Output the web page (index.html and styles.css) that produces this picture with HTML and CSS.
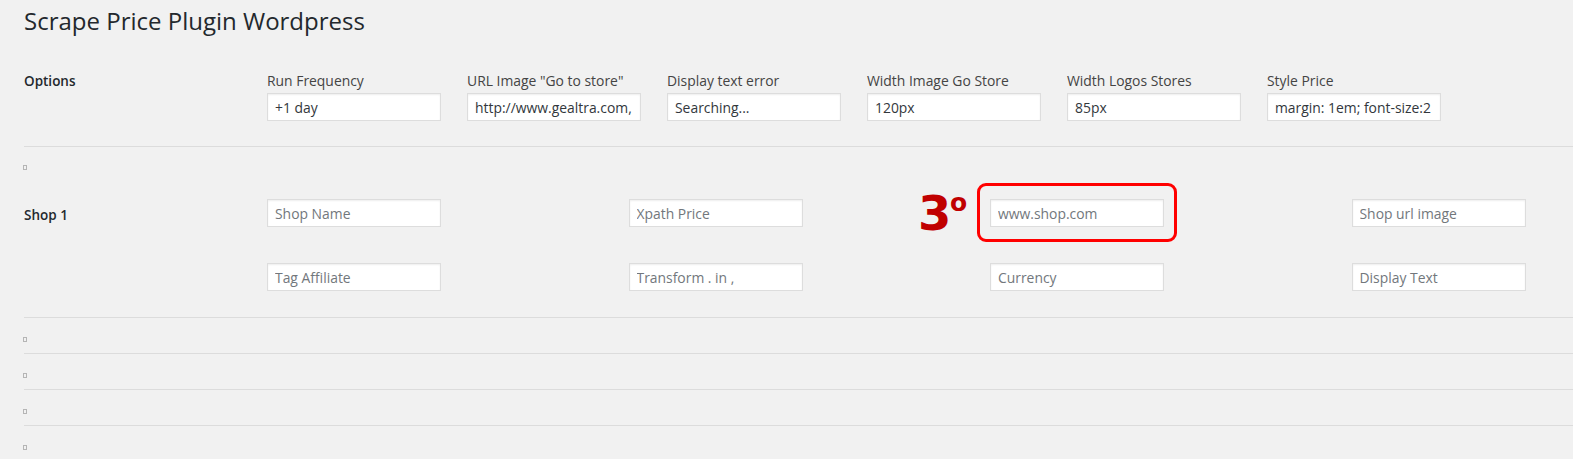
FILE: index.html
```html
<!DOCTYPE html>
<html lang="en">
<head>
<meta charset="utf-8">
<title>Scrape Price Plugin Wordpress</title>
<link rel="stylesheet" href="styles.css">
</head>
<body>
<div class="page">
  <h1 class="title">Scrape Price Plugin Wordpress</h1>

  <div class="row options-row">
    <div class="th">Options</div>
    <div class="option-fields">
      <div class="field">
        <label class="field-label">Run Frequency</label>
        <input class="text-input" type="text" value="+1 day">
      </div>
      <div class="field">
        <label class="field-label">URL Image "Go to store"</label>
        <input class="text-input" type="text" value="http://www.gealtra.com,">
      </div>
      <div class="field">
        <label class="field-label">Display text error</label>
        <input class="text-input" type="text" value="Searching...">
      </div>
      <div class="field">
        <label class="field-label">Width Image Go Store</label>
        <input class="text-input" type="text" value="120px">
      </div>
      <div class="field">
        <label class="field-label">Width Logos Stores</label>
        <input class="text-input" type="text" value="85px">
      </div>
      <div class="field">
        <label class="field-label">Style Price</label>
        <input class="text-input" type="text" value="margin: 1em; font-size:2">
      </div>
    </div>
  </div>

  <div class="section shop-section">
    <span class="tofu"></span>
    <div class="row shop-row">
      <div class="th shop-th">Shop 1</div>
      <div class="shop-grid">
        <div class="cell"><input class="text-input" type="text" placeholder="Shop Name"></div>
        <div class="cell"><input class="text-input" type="text" placeholder="Xpath Price"></div>
        <div class="cell annotated">
          <span class="step-num">3</span>
          <span class="step-sup">o</span>
          <span class="highlight-box"></span>
          <input class="text-input" type="text" placeholder="www.shop.com">
        </div>
        <div class="cell"><input class="text-input" type="text" placeholder="Shop url image"></div>
        <div class="cell"><input class="text-input" type="text" placeholder="Tag Affiliate"></div>
        <div class="cell"><input class="text-input" type="text" placeholder="Transform . in ,"></div>
        <div class="cell"><input class="text-input" type="text" placeholder="Currency"></div>
        <div class="cell"><input class="text-input" type="text" placeholder="Display Text"></div>
      </div>
    </div>
  </div>

  <div class="section empty-section"><span class="tofu"></span></div>
  <div class="section empty-section"><span class="tofu"></span></div>
  <div class="section empty-section"><span class="tofu"></span></div>
  <div class="section empty-section"><span class="tofu"></span></div>
</div>
</body>
</html>
```

FILE: styles.css
```css
* {
  box-sizing: border-box;
}

html, body {
  margin: 0;
  padding: 0;
  background: #f1f1f1;
}

body {
  font-family: "Open Sans", "Noto Sans", sans-serif;
  font-size: 14px;
  color: #444;
  overflow: hidden;
}

.page {
  padding-left: 24px;
  width: 1573px;
}

.title {
  margin: 0;
  padding-top: 6px;
  font-size: 24px;
  font-weight: 400;
  line-height: 30px;
  color: #23282d;
  letter-spacing: 0;
}

.row {
  display: flex;
  align-items: flex-start;
}

.th {
  width: 243px;
  flex: none;
  font-weight: 600;
  color: #23282d;
  font-size: 13.5px;
  line-height: 18px;
}

.options-row {
  padding-top: 36px;
  padding-bottom: 25px;
}

.option-fields {
  display: flex;
  gap: 26px;
}

.field {
  width: 174px;
  display: flex;
  flex-direction: column;
}

.field-label {
  font-size: 13.9px;
  line-height: 18px;
  color: #444;
  white-space: nowrap;
  margin-bottom: 3px;
}

.text-input {
  width: 174px;
  height: 28px;
  margin: 0;
  padding: 1px 7px 0;
  border: 1px solid #ddd;
  background: #fff;
  box-shadow: inset 0 1px 2px rgba(0, 0, 0, 0.07);
  font-family: "Open Sans", "Noto Sans", sans-serif;
  font-size: 13.9px;
  color: #32373c;
  outline: none;
  border-radius: 0;
}

.text-input::placeholder {
  color: #72777c;
  opacity: 1;
}

.section {
  border-top: 1px solid #dcdcdc;
  padding-top: 18px;
}

.tofu {
  display: block;
  width: 4px;
  height: 5px;
  margin-left: -1px;
  border: 1px solid #b5b5b5;
}

.shop-section {
  padding-bottom: 26px;
}

.shop-row {
  margin-top: 29px;
}

.shop-th {
  padding-top: 7px;
}

.shop-grid {
  display: grid;
  grid-template-columns: repeat(4, 174px);
  column-gap: 187.5px;
  row-gap: 36px;
}

.cell {
  position: relative;
  height: 28px;
}

.highlight-box {
  position: absolute;
  left: -13px;
  top: -16px;
  width: 200px;
  height: 59px;
  border: 3px solid #ff0000;
  border-radius: 9px;
  pointer-events: none;
}

.step-num {
  position: absolute;
  left: -72px;
  top: -10px;
  font-family: "DejaVu Sans", sans-serif;
  font-weight: 700;
  font-size: 48px;
  line-height: 48px;
  color: #c00000;
}

.step-sup {
  position: absolute;
  left: -40px;
  top: -9px;
  font-family: "DejaVu Sans", sans-serif;
  font-weight: 700;
  font-size: 25px;
  line-height: 26px;
  color: #c00000;
}

.empty-section {
  height: 36px;
  padding-top: 19px;
}
```
